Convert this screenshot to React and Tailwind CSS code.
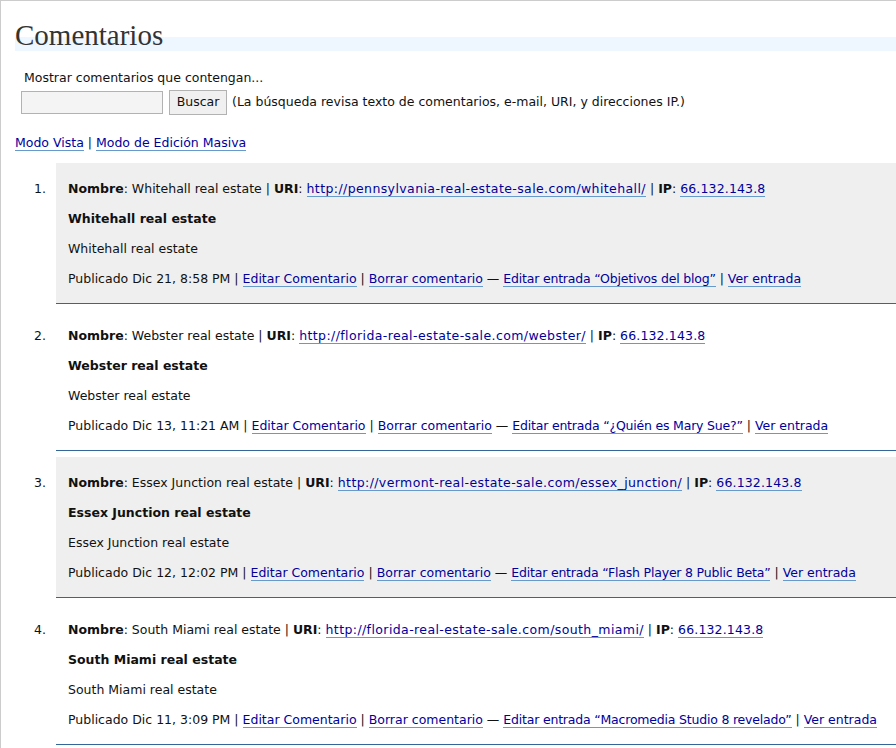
import React from "react";

const comments = [
  {
    n: 1,
    name: "Whitehall real estate",
    uri: "http://pennsylvania-real-estate-sale.com/whitehall/",
    date: "Dic 21, 8:58 PM",
    post: "Objetivos del blog",
    alt: true,
  },
  {
    n: 2,
    name: "Webster real estate",
    uri: "http://florida-real-estate-sale.com/webster/",
    date: "Dic 13, 11:21 AM",
    post: "¿Quién es Mary Sue?",
    alt: false,
  },
  {
    n: 3,
    name: "Essex Junction real estate",
    uri: "http://vermont-real-estate-sale.com/essex_junction/",
    date: "Dic 12, 12:02 PM",
    post: "Flash Player 8 Public Beta",
    alt: true,
  },
  {
    n: 4,
    name: "South Miami real estate",
    uri: "http://florida-real-estate-sale.com/south_miami/",
    date: "Dic 11, 3:09 PM",
    post: "Macromedia Studio 8 revelado",
    alt: false,
  },
];

function L({ children, extra = "" }) {
  return (
    <a href="#" className={"text-[#00019b] border-b border-[#69c] no-underline " + extra}>
      {children}
    </a>
  );
}

export default function App() {
  return (
    <div className="min-h-screen bg-white border-t border-l border-[#ccc] font-['DejaVu_Sans',sans-serif] text-[12.5px] text-[#111] overflow-hidden">
      <div className="pt-[32px]">
        <h2 className="ml-[14px] h-[4px] leading-[4px] border-b-[14px] border-[#eef6ff] box-content font-['Liberation_Serif',serif] text-[29px] font-normal text-[#333] whitespace-nowrap">
          Comentarios
        </h2>
      </div>

      <div className="mt-[18px] ml-[20px]">
        <p className="pl-[3px] leading-[18px]">Mostrar comentarios que contengan...</p>
        <div className="mt-[3px] flex items-center whitespace-nowrap">
          <input
            type="text"
            className="w-[142px] h-[23px] bg-[#f4f4f4] border border-[#b2b2b2] outline-none"
          />
          <button className="ml-[6px] w-[58px] h-[25px] bg-[#f0f0f0] border border-[#b2b2b2] text-[12.5px] text-[#111] font-['DejaVu_Sans',sans-serif]">
            Buscar
          </button>
          <span className="ml-[5px]">
            (La búsqueda revisa texto de comentarios, e-mail, URI, y direcciones IP.)
          </span>
        </div>
      </div>

      <div className="mt-[19px] ml-[14px] leading-[18px]">
        <L>Modo Vista</L> | <L>Modo de Edición Masiva</L>
      </div>

      <ol className="mt-[11px] ml-[14px]">
        {comments.map((c) => (
          <li key={c.n} className="flex mb-[6px]">
            <div className="w-[41px] shrink-0 pt-[17px] pr-[10px] text-right leading-[18px]">
              {c.n}.
            </div>
            <div
              className={
                "flex-1 flex flex-col gap-[12px] px-[12px] pt-[17px] pb-[15px] border-b border-[#369] leading-[18px] whitespace-nowrap " +
                (c.alt ? "bg-[#efefef]" : "bg-white")
              }
            >
              <p>
                <strong>Nombre</strong>: {c.name} | <strong>URI</strong>:{" "}
                <L extra="tracking-[0.4px]">{c.uri}</L> | <strong>IP</strong>:{" "}
                <L extra="tracking-[0.15px]">66.132.143.8</L>
              </p>
              <p className="font-bold">{c.name}</p>
              <p>{c.name}</p>
              <p>
                Publicado {c.date} | <L>Editar Comentario</L> | <L>Borrar comentario</L> —{" "}
                <L extra="tracking-[-0.2px]">Editar entrada “{c.post}”</L> | <L>Ver entrada</L>
              </p>
            </div>
          </li>
        ))}
      </ol>
    </div>
  );
}
